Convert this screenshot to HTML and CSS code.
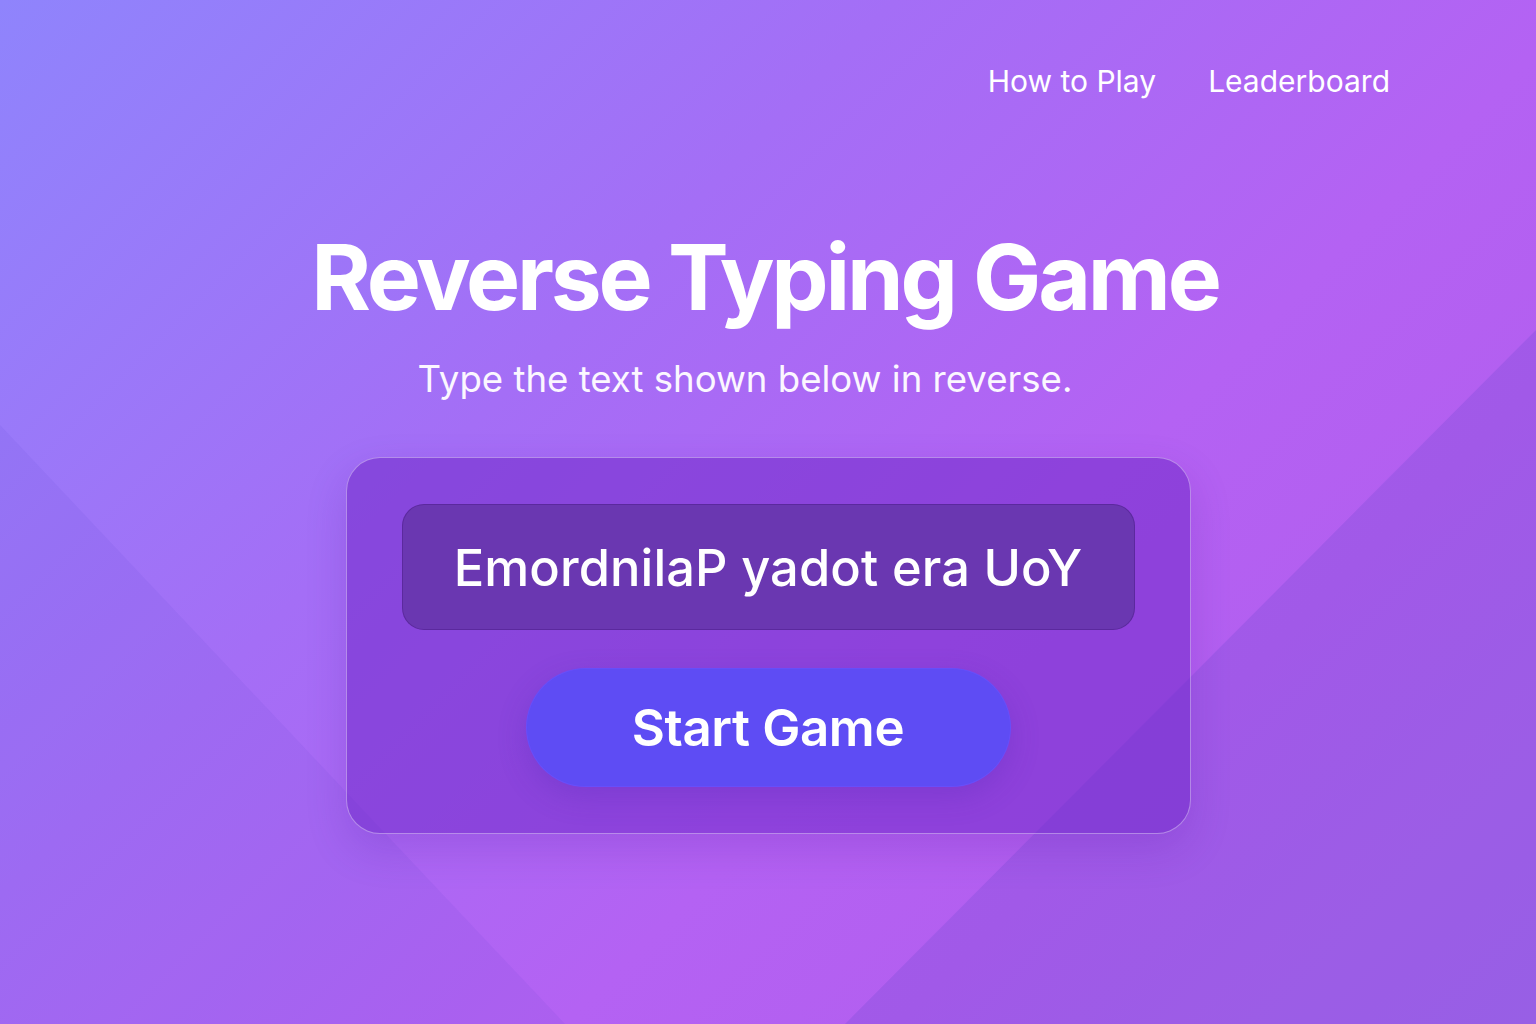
FILE: index.html
```html
<!DOCTYPE html>
<html lang="en">
<head>
<meta charset="utf-8">
<title>Reverse Typing Game</title>
<link rel="stylesheet" href="styles.css">
</head>
<body>
<div class="page">
  <div class="shade shade-left"></div>
  <div class="shade shade-right"></div>
  <header class="topbar">
    <nav class="nav">
      <a class="nav-link" href="#">How to Play</a>
      <a class="nav-link" href="#">Leaderboard</a>
    </nav>
  </header>
  <main class="hero">
    <h1 class="title">Reverse Typing Game</h1>
    <p class="subtitle">Type the text shown below in reverse.</p>
    <section class="card">
      <div class="prompt">EmordnilaP yadot era UoY</div>
      <button class="start-btn" type="button">Start Game</button>
    </section>
  </main>
</div>
</body>
</html>
```

FILE: styles.css
```css
* { box-sizing: border-box; }

html, body {
  margin: 0;
  padding: 0;
}

body {
  font-family: "Inter", "Noto Sans", "Liberation Sans", sans-serif;
  color: #ffffff;
}

.page {
  position: relative;
  width: 1536px;
  height: 1024px;
  overflow: hidden;
  background: linear-gradient(135deg, #8f84fc 0%, #a46ef6 35%, #b462f3 62%, #b35ff0 75%, #a866ec 100%);
}

.shade {
  position: absolute;
  inset: 0;
  pointer-events: none;
}

.shade-left {
  background: rgba(70, 60, 200, 0.07);
  clip-path: polygon(0 425px, 565px 1024px, 0 1024px);
}

.shade-right {
  background: rgba(70, 60, 190, 0.16);
  clip-path: polygon(1536px 330px, 845px 1024px, 1536px 1024px);
}

.topbar {
  position: relative;
  display: flex;
  justify-content: flex-end;
  padding: 62px 146px 0 0;
}

.nav {
  display: flex;
  gap: 52px;
}

.nav-link {
  color: #ffffff;
  text-decoration: none;
  font-size: 30px;
  font-weight: 400;
  line-height: 38px;
  letter-spacing: 0;
}

.hero {
  position: relative;
  display: flex;
  flex-direction: column;
  align-items: center;
  padding-top: 122px;
}

.title {
  margin: 0;
  font-size: 91px;
  font-weight: 700;
  line-height: 110px;
  letter-spacing: -3.2px;
  transform: translateX(-3px);
}

.subtitle {
  margin: 25px 0 0;
  font-size: 36.6px;
  font-weight: 400;
  line-height: 44px;
  color: #fbf7ff;
  transform: translateX(-23px);
}

.card {
  margin-top: 56px;
  width: 845px;
  height: 377px;
  padding: 46px 56px 0;
  display: flex;
  flex-direction: column;
  align-items: center;
  background: rgba(112, 40, 200, 0.55);
  border: 1px solid rgba(255, 255, 255, 0.38);
  border-radius: 34px;
  box-shadow: 0 16px 40px rgba(80, 20, 160, 0.18);
}

.prompt {
  width: 733px;
  height: 126px;
  display: flex;
  align-items: center;
  justify-content: center;
  background: #6a37b1;
  border: 1px solid rgba(85, 35, 150, 0.7);
  border-radius: 22px;
  font-size: 50.6px;
  font-weight: 500;
  letter-spacing: 0.1px;
  color: #ffffff;
}

.start-btn {
  margin-top: 38px;
  width: 485px;
  height: 119px;
  border: 1px solid rgba(110, 80, 255, 0.6);
  border-radius: 60px;
  background: #5e4cf4;
  color: #ffffff;
  font-family: inherit;
  font-size: 51px;
  font-weight: 600;
  letter-spacing: -0.4px;
  box-shadow: 0 10px 28px rgba(80, 40, 180, 0.25);
  cursor: pointer;
}
```
